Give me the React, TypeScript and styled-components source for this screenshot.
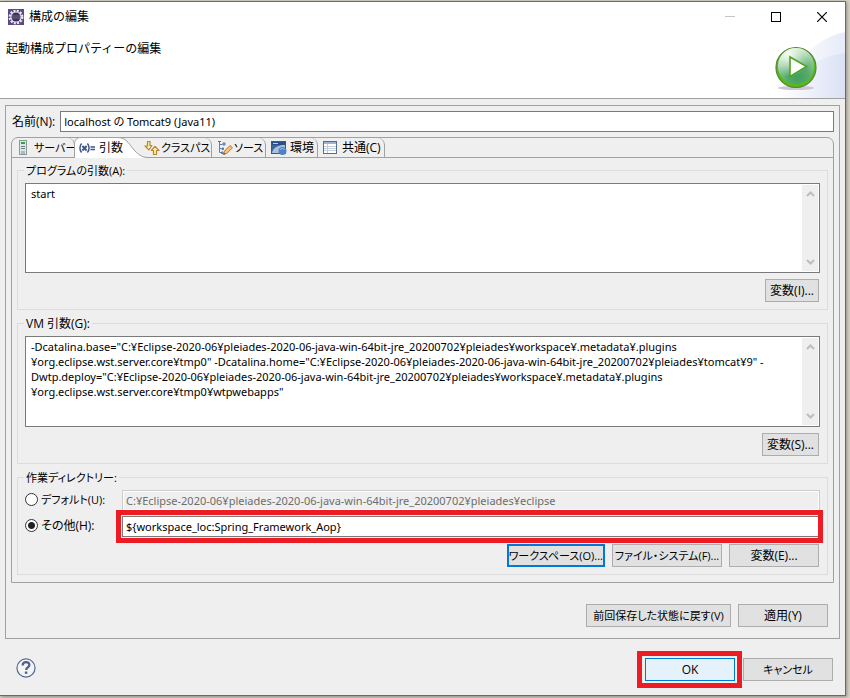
import React from "react";
import styled, { createGlobalStyle, css } from "styled-components";

const GlobalStyle = createGlobalStyle`
  * { box-sizing: border-box; }
  body {
    margin: 0;
    background: #d6d2c6;
    color: #000;
    font: 12px/16px "Open Sans", "Noto Sans CJK JP", sans-serif;
  }
  button, input, textarea { font: inherit; color: inherit; margin: 0; }
`;

const Desktop = styled.div`
  display: flex;
  min-height: 100vh;
  padding: 1px 4px 2px 0;
  background: #d6d2c6;
`;

const Window = styled.main`
  flex: 1;
  min-width: 0;
  display: flex;
  flex-direction: column;
  background: #efefef;
  border: solid #6b6b66;
  border-width: 1px 1px 1px 0;
  box-shadow: 1px 1px 3px #8f8b80;
`;

const Header = styled.header`
  position: relative;
  height: 97px;
  background: #fff;
  border-bottom: 1px solid #a0a0a0;
`;

const TitleBar = styled.div`
  display: flex;
  align-items: center;
  justify-content: space-between;
  height: 29px;
  padding-left: 8px;
`;

const Title = styled.h1`
  display: flex;
  align-items: center;
  gap: 5px;
  margin: 0;
  font-size: 12px;
  font-weight: 400;
`;

const WindowControls = styled.div`
  display: flex;
`;

const WindowControl = styled.button`
  width: 46px;
  height: 28px;
  padding: 0;
  display: grid;
  place-items: center;
  border: 0;
  background: none;
`;

const Message = styled.p`
  margin: 0;
  padding: 10px 6px;
`;

const Banner = styled.svg`
  position: absolute;
  right: 0;
  bottom: 0;
`;

const Panel = styled.section`
  flex: 1;
  display: flex;
  flex-direction: column;
  margin: 6px 5px 0;
  padding: 5px;
  border: 1px solid #a0a0a0;
  font-feature-settings: "palt";
`;

const NameRow = styled.div`
  display: flex;
  align-items: center;
  gap: 5px;
  padding-left: 1px;
`;

const typedText = css`
  font-family: "Noto Sans", "Noto Sans CJK JP", sans-serif;
  font-size: 11px;
`;

const TextField = styled.input`
  ${typedText}
  flex: 1;
  min-width: 0;
  width: 100%;
  height: 21px;
  padding: 0 3px 1px;
  border: 1px solid #7a7a7a;
  background: #fff;
  &:disabled {
    border-color: #ccc;
    background: #efefef;
    box-shadow: inset 0 0 0 1px #fff;
    color: #6d6d6d;
  }
`;

const TabFolder = styled.div`
  margin-top: 5px;
  border: 1px solid #a0a0a0;
  border-radius: 7px 7px 0 0;
`;

const TabList = styled.div`
  display: flex;
  height: 20px;
  border-bottom: 1px solid #a0a0a0;
`;

const Tab = styled.button<{ $width: number; $selected?: boolean; $small?: boolean }>`
  position: relative;
  display: flex;
  align-items: center;
  gap: ${(p) => (p.$small ? 1 : 3)}px;
  width: ${(p) => p.$width}px;
  height: 19px;
  padding: 0 0 0 5px;
  border: 0;
  background: none;
  white-space: nowrap;
  font-size: ${(p) => (p.$small ? 11 : 12)}px;
  font-feature-settings: inherit;
  ${(p) =>
    p.$selected
      ? css`
          height: 20px;
          gap: 4px;
          padding: 0 0 1px 4px;
        `
      : css`
          border-right: 1px solid #a0a0a0;
          border-radius: 0 7px 0 0;
        `}
`;

const TabShape = styled.svg`
  position: absolute;
  left: -1px;
  top: -1px;
`;

const TabText = styled.span`
  position: relative;
`;

const TabIcon = styled.svg`
  position: relative;
  flex: none;
`;

const TabBody = styled.div`
  display: flex;
  flex-direction: column;
  gap: 5px;
  padding: 4px 5px 7px;
`;

const Group = styled.fieldset`
  min-width: 0;
  margin: 0;
  padding: 5px 7px 7px;
  border: 1px solid #dcdcdc;
`;

const GroupTitle = styled.legend<{ $small?: boolean }>`
  height: 16px;
  padding: 0 2px;
  margin-left: -1px;
  line-height: 18px;
  font-size: ${(p) => (p.$small ? 11 : 12)}px;
`;

const TextBox = styled.div<{ $height: number }>`
  display: flex;
  min-height: ${(p) => p.$height}px;
  padding: 1px;
  background: #fff;
  border: 1px solid #7a7a7a;
`;

const TextArea = styled.textarea`
  ${typedText}
  flex: 1;
  min-width: 0;
  display: block;
  padding: 1px 4px;
  border: 0;
  resize: none;
  overflow: hidden;
  background: none;
  line-height: 15px;
  white-space: pre;
`;

const ScrollTrack = styled.div`
  width: 16px;
  padding: 6px 0;
  display: flex;
  flex-direction: column;
  align-items: center;
  justify-content: space-between;
  background: #efefef;
`;

const ButtonRow = styled.div<{ $top: number }>`
  display: flex;
  justify-content: flex-end;
  gap: 7px;
  padding-top: ${(p) => p.$top}px;
  padding-right: 1px;
`;

const PushButton = styled.button<{ $kind?: "focus" | "primary"; $width?: number; $small?: boolean }>`
  height: 23px;
  padding: 0 4px;
  min-width: ${(p) => p.$width ?? 0}px;
  border: 1px solid #adadad;
  background: #e1e1e1;
  white-space: nowrap;
  font-feature-settings: "palt";
  ${(p) =>
    p.$small &&
    css`
      padding: 0;
      font-size: 11px;
    `}
  ${(p) => p.$kind === "focus" && "border: 2px solid #0078d7;"}
  ${(p) => p.$kind === "primary" && "border-color: #0078d7; background: #e5f1fb;"}
`;

const DirectoryGrid = styled.div`
  display: grid;
  grid-template-columns: 97px 1fr;
  row-gap: 5px;
  align-items: center;
`;

const RadioLabel = styled.label<{ $small?: boolean }>`
  display: flex;
  align-items: center;
  gap: 3px;
  padding-bottom: 2px;
  font-size: ${(p) => (p.$small ? 11 : 12)}px;
`;

const Radio = styled.input`
  appearance: none;
  width: 13px;
  height: 13px;
  border: 1px solid #333;
  border-radius: 50%;
  background: #fff;
  &:checked {
    background: radial-gradient(circle, #222 0 3px, #fff 4px);
  }
`;

const Highlight = styled.div<{ $inset: string }>`
  position: relative;
  display: flex;
  &::after {
    content: "";
    position: absolute;
    inset: ${(p) => p.$inset};
    border: 5px solid #ed1c24;
    pointer-events: none;
  }
`;

const PanelActions = styled.div`
  display: flex;
  justify-content: flex-end;
  gap: 7px;
  margin-top: auto;
  padding: 21px 6px 6px;
`;

const Footer = styled.footer`
  display: flex;
  align-items: flex-start;
  justify-content: space-between;
  padding: 19px 12px 14px 16px;
`;

const FooterActions = styled.div`
  display: flex;
  gap: 8px;
`;

const HelpButton = styled.button`
  padding: 0;
  border: 0;
  background: none;
  display: flex;
`;

const line = "#a0a0a0";

function EclipseIcon() {
  return (
    <svg width="16" height="16" viewBox="0 0 16 16" aria-hidden="true">
      <rect width="16" height="16" fill="#5b4a86" />
      <circle cx="8" cy="8" r="6.2" fill="none" stroke="#eeebf5" strokeWidth="2.4" strokeDasharray="1.9 1.35" />
      <circle cx="8" cy="8" r="5.6" fill="#e4dff0" />
      <circle cx="8" cy="8" r="4.5" fill="#3a3350" />
      <path d="M4 7h8M4 9h8" stroke="#756b94" />
    </svg>
  );
}

function ServerIcon() {
  return (
    <TabIcon width="16" height="16" viewBox="0 0 16 16" aria-hidden="true">
      <rect x="2.5" y=".5" width="7" height="14" fill="#dde6e2" stroke="#8a9a94" />
      <rect x="4" y="2" width="4" height="2" fill="#28a83a" />
      <path d="M4 6.5h4M4 8.5h4" stroke="#6f8188" />
      <rect x="4" y="11" width="4" height="3" fill="#a9bac4" />
    </TabIcon>
  );
}

function ArgumentsIcon() {
  return (
    <TabIcon width="16" height="16" viewBox="0 0 16 16" aria-hidden="true">
      <g fill="none" stroke="#3f5686">
        <path d="M2.6 3.5C.4 6 .4 10 2.6 12.5M8.4 3.5c2.2 2.5 2.2 6.500 0 9" strokeWidth="1.5" />
        <path d="M3.4 6l4.2 4.5M7.6 6l-4.2 4.5" strokeWidth="1.9" />
        <path d="M11.5 7h4.5M11.5 9.5h4.5" strokeWidth="1.3" />
      </g>
    </TabIcon>
  );
}

function ClasspathIcon() {
  return (
    <TabIcon width="16" height="16" viewBox="0 0 16 16" aria-hidden="true">
      <g fill="#fdeeb5" stroke="#b8862b" strokeWidth="1.2" strokeLinejoin="round">
        <path d="M3.5 1.5h2.5v4h2L4.8 9.800 1 6h2.5z" />
        <path d="M9.5 14.5h3v-4h2.5L11 6.300 7.300 10.5h2.2z" />
      </g>
    </TabIcon>
  );
}

function SourceIcon() {
  return (
    <TabIcon width="16" height="16" viewBox="0 0 16 16" aria-hidden="true">
      <path d="M2.5 2v10.5M2.5 4.5h3M2.5 8.5h2M2.5 12.5h2" stroke="#5f7fb0" fill="none" />
      <path d="M1 1.5h3M6 3h2v2H6zM5 8h1.5v1.5H5zM4.5 12h1.5v1.5H4.5z" stroke="#4a6ea8" fill="#dfe9f7" />
      <path d="M6.5 14.5l1-3.5 5.5-5.5 2.5 2.2-5.5 5.6z" fill="#f6c57c" stroke="#b9763a" />
      <path d="M6.3 14.8l.6-2 1.5 1.2z" fill="#555" />
    </TabIcon>
  );
}

function EnvironmentIcon() {
  return (
    <TabIcon width="16" height="16" viewBox="0 0 16 16" aria-hidden="true">
      <rect x=".5" y="1.5" width="14" height="12" fill="#a9c0de" stroke="#33598f" />
      <rect x="1" y="2" width="13" height="3" fill="#27508a" />
      <path d="M1 13c1-5 5-7 10-8H1z" fill="#3b679f" />
      <path d="M2 3.5h5" stroke="#b8cdea" />
      <circle cx="11.5" cy="11" r="4" fill="#4d83c4" />
      <path d="M9 9.5c1.5-1.5 3.5-1 4.5 0" stroke="#a9c8ec" fill="none" />
    </TabIcon>
  );
}

function CommonIcon() {
  return (
    <TabIcon width="16" height="16" viewBox="0 0 16 16" aria-hidden="true">
      <rect x=".5" y="1.5" width="13" height="12" fill="#fff" stroke="#5a6c8c" />
      <rect x="1" y="2" width="12" height="2" fill="#9fb2d2" />
      <path d="M4.5 4v9M1 6.5h12M1 8.5h12M1 10.5h12" stroke="#c3ccdb" />
    </TabIcon>
  );
}

function Chevron({ up }: { up?: boolean }) {
  return (
    <svg width="9" height="6" viewBox="0 0 9 6" aria-hidden="true">
      <path d={up ? "M1 5l3.5-3.5L8 5" : "M1 1l3.5 3.5L8 1"} fill="none" stroke="#bdbdbd" strokeWidth="2" />
    </svg>
  );
}

function RunBanner() {
  return (
    <Banner width="110" height="68" viewBox="0 0 110 68" aria-hidden="true">
      <defs>
        <linearGradient id="sweep" x1="0" x2="1">
          <stop offset=".2" stopColor="#fff" />
          <stop offset="1" stopColor="#e6ebf8" />
        </linearGradient>
        <linearGradient id="sweepLow" x1="0" x2="1">
          <stop offset="0" stopColor="#fff" />
          <stop offset="1" stopColor="#dae1f5" />
        </linearGradient>
        <radialGradient id="ball" cx=".55" cy=".8" r=".85">
          <stop offset="0" stopColor="#3f9f5c" />
          <stop offset=".35" stopColor="#56a96c" />
          <stop offset=".65" stopColor="#86c490" />
          <stop offset="1" stopColor="#d8efcf" />
        </radialGradient>
        <radialGradient id="gloss" cx=".3" cy=".2" r=".6">
          <stop offset="0" stopColor="#fff" stopOpacity=".9" />
          <stop offset="1" stopColor="#fff" stopOpacity="0" />
        </radialGradient>
      </defs>
      <path d="M40 68C60 30 82 8 110 2v66z" fill="url(#sweep)" />
      <path d="M45 68C62 40 84 26 110 23v45z" fill="url(#sweepLow)" />
      <ellipse cx="61" cy="58" rx="18" ry="2" fill="#cfc5d4" />
      <circle cx="61" cy="37.5" r="20" fill="#52bd18" stroke="#5f7f3c" strokeWidth="1.2" />
      <circle cx="61" cy="36" r="18" fill="url(#ball)" />
      <circle cx="61" cy="36" r="18" fill="url(#gloss)" />
      <path d="M55 27v19.5L71.5 36.5z" fill="#fff" stroke="#4ea622" strokeWidth="1.6" />
    </Banner>
  );
}

const tabs = [
  { label: "サーバー", width: 63, icon: <ServerIcon />, small: true },
  { label: "引数", width: 64, icon: <ArgumentsIcon />, selected: true },
  { label: "クラスパス", width: 73, icon: <ClasspathIcon />, small: true },
  { label: "ソース", width: 54, icon: <SourceIcon />, small: true },
  { label: "環境", width: 52, icon: <EnvironmentIcon /> },
  { label: "共通(C)", width: 67, icon: <CommonIcon /> },
];

const vmArguments = [
  '-Dcatalina.base="C:¥Eclipse-2020-06¥pleiades-2020-06-java-win-64bit-jre_20200702¥pleiades¥workspace¥.metadata¥.plugins',
  '¥org.eclipse.wst.server.core¥tmp0" -Dcatalina.home="C:¥Eclipse-2020-06¥pleiades-2020-06-java-win-64bit-jre_20200702¥pleiades¥tomcat¥9" -',
  'Dwtp.deploy="C:¥Eclipse-2020-06¥pleiades-2020-06-java-win-64bit-jre_20200702¥pleiades¥workspace¥.metadata¥.plugins',
  '¥org.eclipse.wst.server.core¥tmp0¥wtpwebapps"',
].join("\n");

interface ArgumentGroupProps {
  title: string;
  value: string;
  button: string;
  height: number;
  small?: boolean;
}

function ArgumentGroup({ title, value, button, height, small }: ArgumentGroupProps) {
  return (
    <Group>
      <GroupTitle $small={small}>{title}</GroupTitle>
      <TextBox $height={height}>
        <TextArea aria-label={title} rows={5} defaultValue={value} spellCheck={false} />
        <ScrollTrack>
          <Chevron up />
          <Chevron />
        </ScrollTrack>
      </TextBox>
      <ButtonRow $top={6}>
        <PushButton>{button}</PushButton>
      </ButtonRow>
    </Group>
  );
}

export default function App() {
  return (
    <Desktop>
      <GlobalStyle />
      <Window>
        <Header>
          <RunBanner />
          <TitleBar>
            <Title>
              <EclipseIcon />
              構成の編集
            </Title>
            <WindowControls>
              <WindowControl aria-label="最小化" disabled>
                <svg width="10" height="10"><path d="M0 4.5h10" stroke="#c4c4c4" /></svg>
              </WindowControl>
              <WindowControl aria-label="最大化">
                <svg width="10" height="10"><rect x=".5" y=".5" width="9" height="9" fill="none" stroke="#000" /></svg>
              </WindowControl>
              <WindowControl aria-label="閉じる">
                <svg width="10" height="10"><path d="M0 0l10 10M10 0L0 10" stroke="#000" strokeWidth="1.2" /></svg>
              </WindowControl>
            </WindowControls>
          </TitleBar>
          <Message>起動構成プロパティーの編集</Message>
        </Header>

        <Panel>
          <NameRow>
            <label htmlFor="name">名前(N):</label>
            <TextField id="name" defaultValue="localhost の Tomcat9 (Java11)" />
          </NameRow>

          <TabFolder>
            <TabList role="tablist">
              {tabs.map((tab) => (
                <Tab
                  key={tab.label}
                  role="tab"
                  aria-selected={!!tab.selected}
                  $width={tab.width}
                  $selected={tab.selected}
                  $small={tab.small}
                >
                  {tab.selected && (
                    <TabShape width="76" height="22" viewBox="0 0 76 22" aria-hidden="true">
                      <path
                        d="M.5 21V7C.5 3 3 .5 7 .5H44C53 .5 56 9 61 14S69 20.5 75 20.5V21z"
                        fill="#fff"
                      />
                      <path
                        d="M.5 21V7C.5 3 3 .5 7 .5H44C53 .5 56 9 61 14S69 20.5 75 20.5"
                        fill="none"
                        stroke={line}
                      />
                    </TabShape>
                  )}
                  {tab.icon}
                  <TabText>{tab.label}</TabText>
                </Tab>
              ))}
            </TabList>

            <TabBody role="tabpanel">
              <ArgumentGroup title="プログラムの引数(A):" value="start" button="変数(I)..." height={90} small />
              <ArgumentGroup title="VM 引数(G):" value={vmArguments} button="変数(S)..." height={91} />
              <Group>
                <GroupTitle $small>作業ディレクトリー:</GroupTitle>
                <DirectoryGrid>
                  <RadioLabel $small>
                    <Radio type="radio" name="directory" />
                    デフォルト(U):
                  </RadioLabel>
                  <TextField
                    disabled
                    aria-label="デフォルト(U)"
                    defaultValue="C:¥Eclipse-2020-06¥pleiades-2020-06-java-win-64bit-jre_20200702¥pleiades¥eclipse"
                  />
                  <RadioLabel>
                    <Radio type="radio" name="directory" defaultChecked />
                    その他(H):
                  </RadioLabel>
                  <Highlight $inset="-6px -3px -6px -6px">
                    <TextField aria-label="その他(H)" defaultValue="${workspace_loc:Spring_Framework_Aop}" />
                  </Highlight>
                </DirectoryGrid>
                <ButtonRow $top={7}>
                  <PushButton $kind="focus" $width={98} $small>ワークスペース(O)...</PushButton>
                  <PushButton $width={110} $small>ファイル・システム(F)...</PushButton>
                  <PushButton $width={90}>変数(E)...</PushButton>
                </ButtonRow>
              </Group>
            </TabBody>
          </TabFolder>

          <PanelActions>
            <PushButton $width={145} $small>前回保存した状態に戻す(V)</PushButton>
            <PushButton $width={90}>適用(Y)</PushButton>
          </PanelActions>
        </Panel>

        <Footer>
          <HelpButton aria-label="ヘルプ">
            <svg width="20" height="20" viewBox="0 0 21 21" aria-hidden="true">
              <circle cx="10.5" cy="10.5" r="9.5" fill="#f4f4f6" stroke="#566c92" strokeWidth="1.3" />
              <path d="M7 7.8C7 3.2 14 3.2 14 7.3c0 2.7-3.3 2.4-3.3 5.2" fill="none" stroke="#4f5f8c" strokeWidth="2.4" />
              <rect x="9.3" y="14.2" width="2.6" height="2.4" fill="#4f5f8c" />
            </svg>
          </HelpButton>
          <FooterActions>
            <Highlight $inset="-7px -7px -7px -8px">
              <PushButton $kind="primary" $width={90}>OK</PushButton>
            </Highlight>
            <PushButton $width={90} $small>キャンセル</PushButton>
          </FooterActions>
        </Footer>
      </Window>
    </Desktop>
  );
}
